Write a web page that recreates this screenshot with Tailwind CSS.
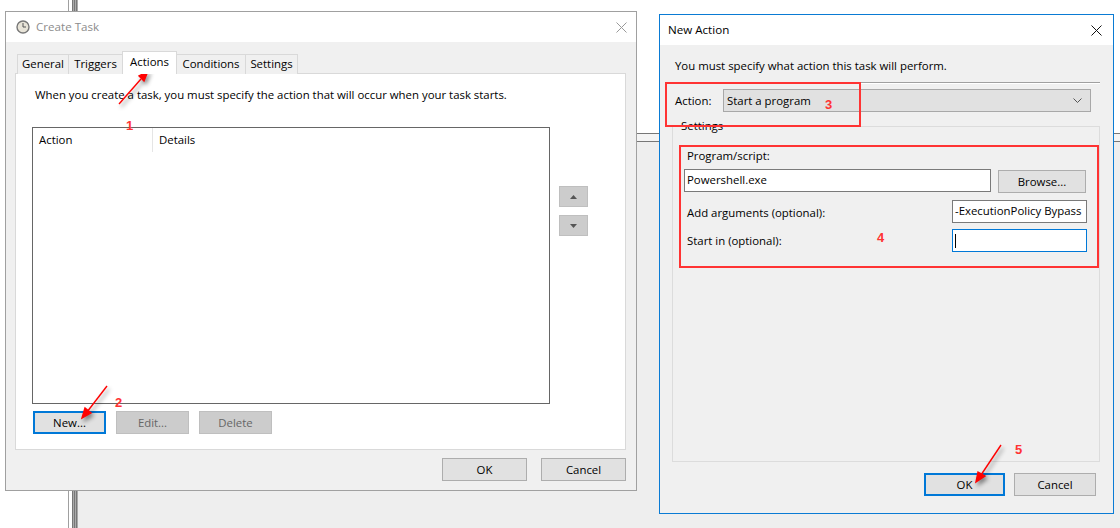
<!DOCTYPE html>
<html lang="en">
<head>
    <meta charset="UTF-8">
    <title>Create Task - New Action</title>
    <script src="https://cdn.jsdelivr.net/npm/@tailwindcss/browser@4"></script>
</head>
<body class="bg-white w-[1120px] h-[528px] overflow-hidden relative text-[11.4px] text-black font-['Open_Sans',sans-serif]">
    <!-- Desktop behind the dialogs -->
    <div class="absolute left-[78px] top-[142px] right-0 bottom-0 bg-[#eeeeee]"></div>
    <div class="absolute left-[68px] top-0 w-px h-full bg-[#a0a0a0]"></div>
    <div class="absolute left-[72px] top-0 w-[6px] h-full bg-[repeating-linear-gradient(90deg,#777_0,#777_1px,#aaa_1px,#aaa_2px)]"></div>
    <div class="absolute left-[637px] top-[133px] right-0 h-[9px] bg-[#f4f4f4] border-y border-[#777]"></div>

    <!-- Create Task window -->
    <div class="absolute left-[5px] top-[11px] w-[632px] h-[480px] border border-[#a0a0a0] bg-[#f0f0f0] flex flex-col">
        <div class="h-[30px] bg-white flex items-center pl-[10px] pr-[9px] shrink-0">
            <svg class="w-[14px] h-[14px] mr-[6px]" viewBox="0 0 14 14">
                <circle cx="7" cy="7" r="6" fill="#e8e4d8" stroke="#777" stroke-width="1.4"/>
                <path d="M7 3v4h3" fill="none" stroke="#555" stroke-width="1"/>
            </svg>
            <span class="text-[#8c8c8c] text-[11.6px]">Create Task</span>
            <svg class="w-[11px] h-[11px] ml-auto" viewBox="0 0 11 11"><path d="M.5.5l10 10M10.5.5l-10 10" stroke="#999" fill="none"/></svg>
        </div>
        <div class="pl-[9px] pr-[11px] pt-[9px] flex flex-col flex-1">
            <!-- Tabs -->
            <div class="flex items-end h-[23px] relative z-10 pl-[2px]">
                <div class="w-[51px] h-[20px] text-center border border-r-0 border-b-0 border-[#d9d9d9] bg-[#f0f0f0] leading-[17px]">General</div>
                <div class="w-[54px] h-[20px] text-center border border-r-0 border-b-0 border-[#d9d9d9] bg-[#f0f0f0] leading-[17px]">Triggers</div>
                <div class="w-[55px] h-[23px] text-center border border-b-0 border-[#d9d9d9] bg-white leading-[19px]">Actions</div>
                <div class="w-[68px] h-[20px] text-center border-t border-[#d9d9d9] bg-[#f0f0f0] leading-[17px]">Conditions</div>
                <div class="w-[53px] h-[20px] text-center border border-b-0 border-[#d9d9d9] bg-[#f0f0f0] leading-[17px]">Settings</div>
            </div>
            <!-- Actions panel -->
            <div class="w-[611px] h-[377px] -mt-px border border-[#d9d9d9] bg-white pl-[16px] pt-[12px] flex flex-col">
                <p class="pl-[3px] h-[17px] leading-[17px]">When you create a task, you must specify the action that will occur when your task starts.</p>
                <div class="flex mt-[24px]">
                    <div class="w-[518px] h-[277px] border border-[#666] flex flex-col">
                        <div class="flex h-[24px] leading-[24px]">
                            <div class="w-[120px] pl-[6px] border-r border-[#e5e5e5]">Action</div>
                            <div class="pl-[6px]">Details</div>
                        </div>
                    </div>
                    <div class="flex flex-col gap-[8px] ml-[9px] mt-[59px]">
                        <div class="w-[29px] h-[21px] bg-[#cccccc] border border-[#bfbfbf] flex items-center justify-center">
                            <svg class="w-[7px] h-[4px]" viewBox="0 0 7 4"><path d="M3.5 0L7 4H0z" fill="#555"/></svg>
                        </div>
                        <div class="w-[29px] h-[21px] bg-[#cccccc] border border-[#bfbfbf] flex items-center justify-center">
                            <svg class="w-[7px] h-[4px]" viewBox="0 0 7 4"><path d="M0 0h7L3.5 4z" fill="#555"/></svg>
                        </div>
                    </div>
                </div>
                <div class="flex gap-[10px] mt-[7px] pl-px">
                    <div class="w-[73px] h-[23px] border-2 border-[#0078d7] bg-[#e1e1e1] flex items-center justify-center">New...</div>
                    <div class="w-[73px] h-[23px] border border-[#bfbfbf] bg-[#cccccc] text-[#666] flex items-center justify-center">Edit...</div>
                    <div class="w-[73px] h-[23px] border border-[#bfbfbf] bg-[#cccccc] text-[#666] flex items-center justify-center">Delete</div>
                </div>
            </div>
            <div class="flex justify-end gap-[14px] mt-[8px] -mr-[1px]">
                <div class="w-[85px] h-[23px] border border-[#adadad] bg-[#e1e1e1] flex items-center justify-center">OK</div>
                <div class="w-[85px] h-[23px] border border-[#adadad] bg-[#e1e1e1] flex items-center justify-center">Cancel</div>
            </div>
        </div>
    </div>

    <!-- New Action window -->
    <div class="absolute left-[659px] top-[14px] w-[455px] h-[500px] border border-[#0a7bd4] bg-[#f0f0f0] flex flex-col">
        <div class="h-[30px] bg-white flex items-center pl-[8px] pr-[11px] shrink-0">
            <span class="text-[11.6px]">New Action</span>
            <svg class="w-[11px] h-[11px] ml-auto" viewBox="0 0 11 11"><path d="M.5.5l10 10M10.5.5l-10 10" stroke="#111" fill="none"/></svg>
        </div>
        <div class="pl-[12px] pr-[13px] flex flex-col flex-1">
            <p class="pl-[3px] mt-[12px] h-[17px] leading-[17px]">You must specify what action this task will perform.</p>
            <div class="h-[2px] mt-[8px] ml-[3px] border-t border-[#a0a0a0] bg-white"></div>
            <div class="flex items-center mt-[5px] pl-[3px] pr-[9px]">
                <span class="w-[48px]">Action:</span>
                <div class="flex-1 h-[23px] border border-[#a8a8a8] bg-[#e1e1e1] flex items-center pl-[3px] pr-[8px] justify-between">
                    <span>Start a program</span>
                    <svg class="w-[9px] h-[5px]" viewBox="0 0 9 5"><path d="M.5.5l4 4 4-4" fill="none" stroke="#555"/></svg>
                </div>
            </div>
            <!-- Settings group box -->
            <div class="relative mt-[14px] w-[428px] h-[336px] border border-[#dcdcdc] pl-[12px] pr-[13px] flex flex-col">
                <span class="absolute left-[7px] -top-[10px] px-px leading-[17px] bg-[#f0f0f0]">Settings</span>
                <div class="pl-[2px] mt-[20px] h-[17px] leading-[17px]">Program/script:</div>
                <div class="flex gap-[7px] mt-[5px] -ml-[1px]">
                    <div class="w-[307px] h-[23px] border border-[#7a7a7a] bg-white pl-[2px] leading-[20px]">Powershell.exe</div>
                    <div class="w-[88px] h-[23px] mt-px border border-[#adadad] bg-[#e1e1e1] flex items-center justify-center">Browse...</div>
                </div>
                <div class="flex items-center justify-between mt-[7px] -mr-px">
                    <span class="pl-[2px] mt-[3px]">Add arguments (optional):</span>
                    <div class="w-[135px] h-[23px] border border-[#7a7a7a] bg-white pl-[2px] leading-[20px] whitespace-nowrap overflow-hidden">-ExecutionPolicy Bypass</div>
                </div>
                <div class="flex items-center justify-between mt-[6px] -mr-px">
                    <span class="pl-[2px] mt-[1px]">Start in (optional):</span>
                    <div class="w-[135px] h-[23px] border border-[#0078d7] bg-white pl-[2px] flex items-center"><span class="w-px h-[14px] bg-black"></span></div>
                </div>
            </div>
            <div class="flex justify-end gap-[9px] mt-[11px] mr-[4px]">
                <div class="w-[81px] h-[23px] border-2 border-[#0078d7] bg-[#e1e1e1] flex items-center justify-center">OK</div>
                <div class="w-[82px] h-[23px] border border-[#adadad] bg-[#e1e1e1] flex items-center justify-center">Cancel</div>
            </div>
        </div>
    </div>

    <!-- Red callout boxes drawn over the screenshot -->
    <div class="absolute left-[665px] top-[82px] w-[196px] h-[45px] border-2 border-[#ff3333]"></div>
    <div class="absolute left-[679px] top-[145px] w-[420px] h-[123px] border-2 border-[#ff3333]"></div>

    <!-- Arrows -->
    <svg class="absolute left-0 top-0 drop-shadow-[2px_3px_2px_rgba(0,0,0,0.45)]" width="1120" height="528" viewBox="0 0 1120 528">
        <g stroke="#ff0000" stroke-width="1.4" fill="#ff0000">
            <path d="M119 104L141 79"/>
            <path d="M148 71L139 76L144 81z"/>
            <path d="M107 386L87 412"/>
            <path d="M82 418L85 408L91 413z"/>
            <path d="M1001 445L981 475"/>
            <path d="M976 482L978 472L985 476z"/>
        </g>
    </svg>

    <!-- Step numbers -->
    <span class="absolute left-[126px] top-[118px] text-[13px] leading-[15px] font-bold text-[#ff3333] font-['Liberation_Sans',sans-serif]">1</span>
    <span class="absolute left-[115px] top-[395px] text-[13px] leading-[15px] font-bold text-[#ff3333] font-['Liberation_Sans',sans-serif]">2</span>
    <span class="absolute left-[825px] top-[97px] text-[13px] leading-[15px] font-bold text-[#ff3333] font-['Liberation_Sans',sans-serif]">3</span>
    <span class="absolute left-[877px] top-[230px] text-[13px] leading-[15px] font-bold text-[#ff3333] font-['Liberation_Sans',sans-serif]">4</span>
    <span class="absolute left-[1015px] top-[442px] text-[13px] leading-[15px] font-bold text-[#ff3333] font-['Liberation_Sans',sans-serif]">5</span>
</body>
</html>
